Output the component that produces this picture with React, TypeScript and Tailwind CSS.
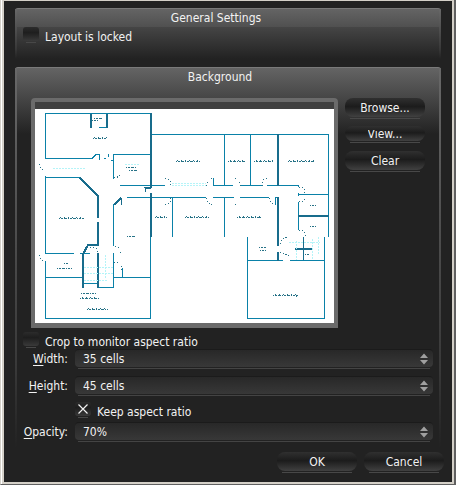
import { ReactNode } from "react";

const dark = "#186c8c";

function Panel({ title, className, titleClass, children }: { title: string; className: string; titleClass: string; children: ReactNode }) {
  return (
    <section className={"relative rounded-t-[3px] border-t border-[#7a7a7a] " + className}>
      <div className="pointer-events-none absolute inset-y-0 left-0 w-[2px] bg-linear-to-b from-[#686868] via-[#383838] via-80% to-[#222222]" />
      <div className="pointer-events-none absolute inset-y-0 right-0 w-[2px] bg-linear-to-b from-[#686868] via-[#383838] via-80% to-[#222222]" />
      <h2 className={"h-[18px] text-center leading-[18px] " + titleClass}>{title}</h2>
      {children}
    </section>
  );
}

function PushButton({ children, clipped }: { children: ReactNode; clipped?: boolean }) {
  return (
    <div className={"flex w-20 flex-col items-center " + (clipped ? "h-[17px]" : "h-[21px]")}>
      <button
        type="button"
        className={
          "flex w-full shrink-0 items-center justify-center overflow-hidden rounded-[8px] bg-linear-to-b from-[#303030] via-[#1c1c1c] via-45% to-[#414141] " +
          (clipped ? "h-[15px]" : "h-[19px]")
        }
      >
        {clipped ? <span className="block h-[8px] overflow-hidden leading-[8px]">{children}</span> : children}
      </button>
      <div className="mt-px h-px w-[70px] shrink-0 bg-[#484848]" />
    </div>
  );
}

function Check({ label, checked, className }: { label: string; checked?: boolean; className: string }) {
  return (
    <label className={"flex h-[17px] items-start gap-[6px] " + className}>
      <span className="relative block h-4 w-4">
        <input
          type="checkbox"
          defaultChecked={checked}
          className="peer block h-[14px] w-4 appearance-none rounded-[3px] bg-linear-to-b from-[#2c2c2c] via-[#1e1e1e] via-40% to-[#3a3a3a]"
        />
        <svg viewBox="0 0 16 14" className="pointer-events-none absolute top-0 left-0 hidden h-[14px] w-4 peer-checked:block">
          <path d="M3.5 2.5 12.5 11.5M12.5 2.5 3.5 11.5" stroke="#f0f0f0" strokeWidth="1.2" />
        </svg>
        <span className="mx-auto mt-px block h-px w-[10px] bg-[#484848]" />
      </span>
      <span className="pt-[2px] leading-[17px]">{label}</span>
    </label>
  );
}

function Field({ id, hotkey, rest, value }: { id: string; hotkey: string; rest: string; value: string }) {
  return (
    <div className="flex h-5 items-start">
      <label htmlFor={id} className="w-[52px] pr-[7px] text-right leading-[20px] whitespace-nowrap">
        <span className="underline underline-offset-2">{hotkey}</span>
        {rest}
      </label>
      <div className="relative flex-1">
        <input
          id={id}
          defaultValue={value}
          className="block h-[18px] w-full rounded-[4px] border-t border-[#1b1b1b] bg-linear-to-b from-[#282828] to-[#383838] px-2 pt-px outline-none"
        />
        <div className="mx-[3px] mt-px h-px bg-[#444444]" />
        <svg viewBox="0 0 8 12" className="absolute top-[4px] right-[5px] h-3 w-2" fill="#a0a0a0">
          <path d="M0 5 4 0.5 8 5ZM0 7 8 7 4 11.5Z" />
        </svg>
      </div>
    </div>
  );
}

function FloorPlan() {
  return (
    <svg viewBox="35 109 299 214" className="block w-full bg-white" fill="none" shapeRendering="crispEdges" role="img" aria-label="Floor plan">
      <g stroke="#0a81a8">
        <path d="M45 113.5H152M45.5 113V159M45 158.5H92L96 154.5H100M99.5 155V160M104 158.5H106M108.5 154V157M113 154.5H151M113.5 154V179M113 160.5H111M45.5 176V254M45 177.5H80M120 185.5H165M127 197.5H206M113.5 204V246M113.5 253V288M98 287.5H114M113 277.5H151M45 277.5H83M45.5 261V319M45 318.5H151M150.5 236V319M122.5 268V277M45 253.5H74M80 253.5H90M83 283.5H98M99 127.5H108" />
        <path d="M151 134.5H329M328.5 134V237M224.5 134V186M250.5 134V186M213 185.5H233M240 185.5H262M267 185.5H299M213.5 178V186M213 197.5H234M240 197.5H269M275 197.5H279M275.5 197V205M172.5 197V237M224.5 197V237M298.5 185V187M298.5 193V196M298 194.5H328M298.5 202V230M247.5 237V319M247 260.5H283M290 260.5H325M324.5 237V318M247 318.5H325" />
      </g>
      <g stroke={dark} strokeWidth="2">
        <path d="M151 113V187M151 193V237M91 114V128M107 114V128M98 195V218M98 222V246M80 178 98 196M114 205 121 198M83 288V254L88 245H98M98 253V288M278 134V186M278 197V246M278 252V261M298 216H329M295 249H312" />
      </g>
      <path d="M303.5 237V260M121.5 198V205M145 188.5H151M145.5 188V192M144 187.5H152" stroke={dark} />
      <g stroke="#277287" strokeDasharray="1 1 2 1 3 1">
        <path d="M93 138.5H107M94 118.5H102M92 120.5H98M176 161.5H200M228 161.5H245M254 161.5H273M288 161.5H314M59 218.5H84M127 236.5H135M155 217.5H167M185 217.5H209M237 217.5H261M310 205.5H316M310 226.5H316M273 295.5H298M81 293.5H96M80 298.5H100M87 309.5H108M64 263.5H69M57 268.5H72M126 167.5H137M129 170.5H137M259 247.5H266M260 250.5H266M305 254.5H310" />
      </g>
      <g stroke="#277287" strokeDasharray="1 3">
        <path d="M94 137.5H107M177 160.5H200M230 160.5H245M256 160.5H273M289 160.5H314M60 217.5H84M156 216.5H167M186 216.5H209M239 216.5H261M275 294.5H298M296 296.5H299M88 308.5H108M259 216.5V219M82 297.5H98" />
      </g>
      <g stroke="#277287" strokeDasharray="1 2">
        <path d="M39.5 164Q40 169 45 171M39.5 255Q41 260 45 262M206 186Q208 178 213 178M206 198Q208 205 213 205M235 178Q240 180 241 186M235 205Q240 203 241 198M262 186Q262 178 267 178M269 198Q270 203 275 205M299 187Q305 187 305 193M299 202Q305 202 306 197M114 178Q120 177 120 174M115 246Q121 248 121 254M114 262Q122 262 122 270M90 248Q98 246 97 253M299 230Q306 230 305 236M280 244Q281 238 287 237M280 252 289 256M165 178Q171 180 171 185M165 205Q171 203 171 198" />
      </g>
      <g stroke="#b5f4f8" strokeDasharray="2 1">
        <path d="M53 168.5H86M172 185.5H206M172 183.5H206M84 267.5H113M84 273.5H113M84 280.5H108M105.5 255V278M296.5 241V260M312.5 239V260M289 242.5H320M318 237V255M125 164.5H140" />
      </g>
    </svg>
  );
}

export default function App() {
  return (
    <main className="h-screen border-r-2 border-b border-l border-[#606060] border-l-[#d4d0c8] bg-[#222222] text-[12px] text-[#f2f2f2] [font-family:'DejaVu_Sans_Condensed','DejaVu_Sans',sans-serif]">
      <div className="h-full border-l border-white">
        <div className="h-full border-t border-r-2 border-b-2 border-l-2 border-[#d4d0c8] px-[11px] pt-[7px]">
          <Panel title="General Settings" titleClass="pr-6" className="h-[51px] bg-[linear-gradient(#646464,#505050_18px,#454545_18px,#222222)]">
            <Check label="Layout is locked" className="ml-2" />
          </Panel>
          <Panel title="Background" titleClass="pr-4" className="mt-2 h-[381px] bg-[linear-gradient(#646464,#222222_66px)] px-2">
            <div className="mt-3 flex gap-[7px] px-2">
              <div className="min-w-0 flex-1 rounded-t-[4px] border-4 border-b-[5px] border-[#6b6b6b] bg-[#404040] pt-[7px]">
                <FloorPlan />
              </div>
              <div className="flex w-20 flex-col">
                <PushButton>Browse...</PushButton>
                <div className="mt-[7px] mb-2">
                  <PushButton clipped>View...</PushButton>
                </div>
                <PushButton>Clear</PushButton>
              </div>
            </div>
            <Check label="Crop to monitor aspect ratio" className="mt-1" />
            <Field id="width" hotkey="W" rest="idth:" value="35 cells" />
            <div className="mt-[7px]">
              <Field id="height" hotkey="H" rest="eight:" value="45 cells" />
            </div>
            <Check label="Keep aspect ratio" checked className="mt-[6px] ml-[52px]" />
            <div className="mt-[3px]">
              <Field id="opacity" hotkey="O" rest="pacity:" value="70%" />
            </div>
          </Panel>
          <footer className="mt-1 -mr-[3px] flex justify-end gap-[7px]">
            <PushButton>OK</PushButton>
            <PushButton>Cancel</PushButton>
          </footer>
        </div>
      </div>
    </main>
  );
}
